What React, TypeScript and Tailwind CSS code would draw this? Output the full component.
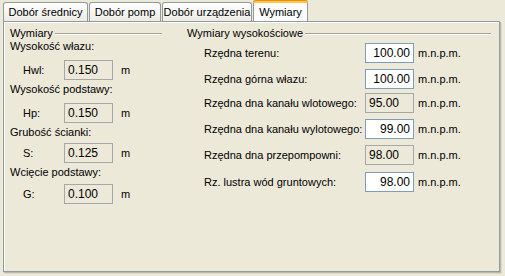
import React from 'react';

const font = { fontFamily: '"Liberation Sans", Arial, sans-serif' };

interface FieldProps {
  value: string;
  enabled?: boolean;
  width?: string;
}

const Field: React.FC<FieldProps> = ({ value, enabled = false, width = 'w-[49px]' }) => (
  <div
    className={`${width} h-[20px] flex items-center px-[3px] border ${
      enabled
        ? 'bg-white border-[#7F9DB9] justify-end'
        : 'bg-[#ECE9D8] border-[#A7A6AA] justify-start'
    }`}
  >
    <span className="text-[12px] leading-none text-black">{value}</span>
  </div>
);

const Tab: React.FC<{ label: string; active?: boolean; width: string }> = ({ label, active, width }) =>
  active ? (
    <div
      className={`${width} h-[21px] -mb-px relative z-10 flex flex-col bg-[#FCFCFE] border-x border-[#919B9C] rounded-t-[3px]`}
    >
      <div className="h-[3px] bg-[#FFC83C] border-t border-[#E68B2C] rounded-t-[3px] -mx-px" />
      <div className="flex-1 flex items-start justify-center pt-[1px] text-[11px]">{label}</div>
    </div>
  ) : (
    <div
      className={`${width} h-[19px] mt-[2px] flex items-center justify-center text-[11px] border border-b-0 border-[#919B9C] rounded-t-[3px] bg-gradient-to-b from-white to-[#ECEBE6]`}
    >
      {label}
    </div>
  );

const GroupHeader: React.FC<{ title: string }> = ({ title }) => (
  <div className="flex items-center h-[13px]">
    <span className="text-[11px] leading-[13px] pr-[2px]">{title}</span>
    <div className="flex-1 h-[2px] border-t border-[#A5A292] bg-white" />
  </div>
);

const leftItems = [
  { title: 'Wysokość włazu:', code: 'Hwl:', value: '0.150', mt: 'mt-0', gap: 'mt-[7px]' },
  { title: 'Wysokość podstawy:', code: 'Hp:', value: '0.150', mt: 'mt-[3px]', gap: 'mt-[7px]' },
  { title: 'Grubość ścianki:', code: 'S:', value: '0.125', mt: 'mt-[3px]', gap: 'mt-[4px]' },
  { title: 'Wcięcie podstawy:', code: 'G:', value: '0.100', mt: 'mt-[3px]', gap: 'mt-[5px]' },
];

const rightItems = [
  { label: 'Rzędna terenu:', value: '100.00', enabled: true, mt: 'mt-[3px]' },
  { label: 'Rzędna górna włazu:', value: '100.00', enabled: true, mt: 'mt-[6px]' },
  { label: 'Rzędna dna kanału wlotowego:', value: '95.00', enabled: false, mt: 'mt-[4px]' },
  { label: 'Rzędna dna kanału wylotowego:', value: '99.00', enabled: true, mt: 'mt-[6px]' },
  { label: 'Rzędna dna przepompowni:', value: '98.00', enabled: false, mt: 'mt-[6px]' },
  { label: 'Rz. lustra wód gruntowych:', value: '98.00', enabled: true, mt: 'mt-[7px]' },
];

export default function App() {
  return (
    <div className="w-[505px] h-[276px] bg-[#ECE9D8] text-black overflow-hidden" style={font}>
      {/* tabs */}
      <div className="flex pl-[3px] h-[21px] items-start">
        <Tab label="Dobór średnicy" width="w-[85px]" />
        <div className="w-px" />
        <Tab label="Dobór pomp" width="w-[72px]" />
        <div className="w-px" />
        <Tab label="Dobór urządzenia" width="w-[90px]" />
        <div className="w-px" />
        <Tab label="Wymiary" active width="w-[55px]" />
      </div>

      {/* panel */}
      <div className="ml-[3px] w-[497px] h-[251px] border border-[#919B9C] bg-[#ECE9D8] shadow-[1px_1px_0_#BBB9AE,2px_2px_0_#DCDACE]">
        <div className="flex h-full border-l border-t border-white pt-[4px]">
          {/* left group */}
          <div className="w-[152px] ml-[5px] flex flex-col">
            <GroupHeader title="Wymiary" />
            {leftItems.map((it) => (
              <div key={it.title} className={`flex flex-col ${it.mt}`}>
                <div className="text-[11px] leading-[13px]">{it.title}</div>
                <div className={`flex items-center ${it.gap}`}>
                  <span className="w-[54px] pl-[13px] text-[11px]">{it.code}</span>
                  <Field value={it.value} width="w-[49px]" />
                  <span className="ml-[8px] text-[11px]">m</span>
                </div>
              </div>
            ))}
          </div>

          {/* right group */}
          <div className="w-[304px] ml-[25px] flex flex-col">
            <GroupHeader title="Wymiary wysokościowe" />
            {rightItems.map((it) => (
              <div key={it.label} className={`flex items-center ${it.mt}`}>
                <span className="w-[178px] pl-[17px] text-[11px]">{it.label}</span>
                <Field value={it.value} enabled={it.enabled} />
                <span className="ml-[4px] text-[11px]">m.n.p.m.</span>
              </div>
            ))}
          </div>
        </div>
      </div>
    </div>
  );
}
